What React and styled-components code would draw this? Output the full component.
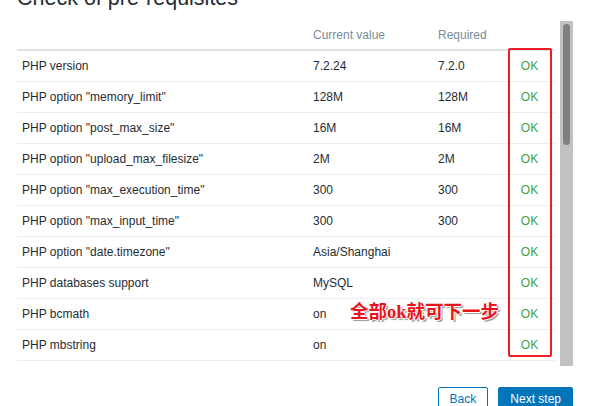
import React from 'react'
import styled, { createGlobalStyle } from 'styled-components'

const rows = [
  ['PHP version', '7.2.24', '7.2.0'],
  ['PHP option "memory_limit"', '128M', '128M'],
  ['PHP option "post_max_size"', '16M', '16M'],
  ['PHP option "upload_max_filesize"', '2M', '2M'],
  ['PHP option "max_execution_time"', '300', '300'],
  ['PHP option "max_input_time"', '300', '300'],
  ['PHP option "date.timezone"', 'Asia/Shanghai', ''],
  ['PHP databases support', 'MySQL', ''],
  ['PHP bcmath', 'on', ''],
  ['PHP mbstring', 'on', ''],
]

function App() {
  return (
    <>
      <GlobalStyle />
      <Page>
        <Title>Check of pre-requisites</Title>
        <ScrollArea>
          <Table>
            <HeadRow>
              <HeadCell></HeadCell>
              <HeadCell>Current value</HeadCell>
              <HeadCell>Required</HeadCell>
              <HeadCell></HeadCell>
            </HeadRow>
            {rows.map(([name, current, required]) => (
              <Row key={name}>
                <Cell>{name}</Cell>
                <Cell>{current}</Cell>
                <Cell>{required}</Cell>
                <StatusCell>OK</StatusCell>
              </Row>
            ))}
          </Table>
          <Track>
            <Thumb />
          </Track>
          <Highlight />
          <Note>全部ok就可下一步</Note>
        </ScrollArea>
        <Buttons>
          <Button>Back</Button>
          <Button $primary>Next step</Button>
        </Buttons>
      </Page>
    </>
  )
}

export default App

const GlobalStyle = createGlobalStyle`
  html, body {
    margin: 0;
    padding: 0;
    background: #fff;
    overflow: hidden;
  }
  body {
    font-family: "Liberation Sans", Arial, sans-serif;
    color: #1f2c33;
  }
`;
const Page = styled.div`
  width: 556px;
  padding-left: 17px;
`;
const Title = styled.h1`
  margin: -14px 0 11px;
  font-size: 21.5px;
  font-weight: normal;
  line-height: 24px;
  color: #1f2c33;
  white-space: nowrap;
`;
const ScrollArea = styled.div`
  position: relative;
  display: flex;
  gap: 5px;
  height: 345px;
`;
const Table = styled.div`
  width: 538px;
  font-size: 12px;
`;
const HeadRow = styled.div`
  display: grid;
  grid-template-columns: 291px 125px 71px 51px;
  align-items: center;
  height: 30px;
  box-sizing: border-box;
  border-bottom: 2px solid #dfe4e7;
`;
const HeadCell = styled.div`
  padding: 0 5px;
  color: #768d99;
  white-space: nowrap;
`;
const Row = styled.div`
  display: grid;
  grid-template-columns: 291px 125px 71px 51px;
  align-items: center;
  height: 31px;
  box-sizing: border-box;
  border-bottom: 1px solid #ebeef0;
`;
const Cell = styled.div`
  padding: 0 5px;
  white-space: nowrap;
`;
const StatusCell = styled.div`
  text-align: center;
  color: #3da047;
`;
const Track = styled.div`
  width: 13px;
  padding: 3px;
  box-sizing: border-box;
  background: #c1c1c1;
`;
const Thumb = styled.div`
  width: 7px;
  height: 121px;
  border-radius: 4px;
  background: #808080;
`;
const Highlight = styled.div`
  position: absolute;
  left: 491px;
  top: 27px;
  width: 44px;
  height: 309px;
  box-sizing: border-box;
  border: 2px solid #ee1d23;
  border-radius: 2px;
`;
const Note = styled.div`
  position: absolute;
  left: 333px;
  top: 279px;
  font-family: "Liberation Serif", "Noto Sans CJK SC", serif;
  font-size: 18.5px;
  font-weight: bold;
  line-height: 24px;
  color: #e8141c;
  white-space: nowrap;
  text-shadow:
    1px 0 0 #fff, -1px 0 0 #fff, 0 1px 0 #fff, 0 -1px 0 #fff,
    2px 2px 1px #9a9a9a;
`;
const Buttons = styled.div`
  display: flex;
  justify-content: flex-end;
  gap: 10px;
  margin-top: 21px;
`;
const Button = styled.button`
  height: 24px;
  padding: 0 11px;
  border: 1px solid #0275b8;
  border-radius: 2px;
  font-family: "Liberation Sans", Arial, sans-serif;
  font-size: 12px;
  line-height: 22px;
  color: ${p => (p.$primary ? '#fff' : '#0275b8')};
  background: ${p => (p.$primary ? '#0275b8' : '#fff')};
`;
